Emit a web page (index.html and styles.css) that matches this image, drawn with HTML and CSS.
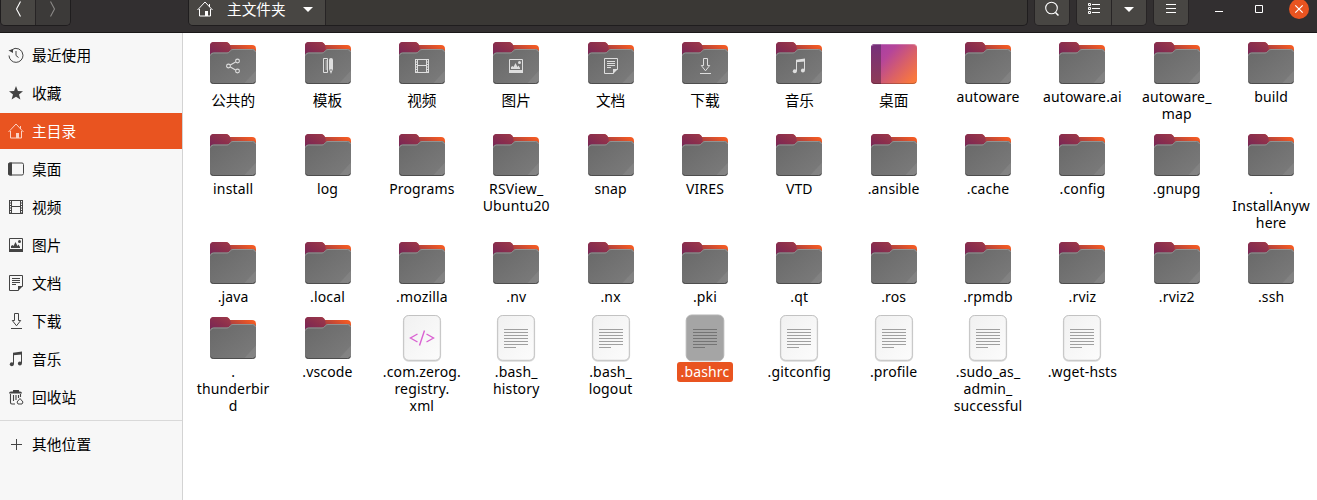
FILE: index.html
```html
<!DOCTYPE html>
<html lang="zh-CN">
<head>
<meta charset="utf-8">
<title>主文件夹</title>
<link rel="stylesheet" href="styles.css">
</head>
<body>
<svg class="defs" width="0" height="0">
  <defs>
    <linearGradient id="g-back" x1="0" y1="1" x2="1" y2="0.4"><stop offset="0" stop-color="#772953"/><stop offset=".45" stop-color="#963548"/><stop offset="1" stop-color="#f15a24"/></linearGradient>
    <linearGradient id="g-tab" x1="0" y1="1" x2="1" y2="0"><stop offset="0" stop-color="#762557"/><stop offset=".55" stop-color="#8c2f4c"/><stop offset="1" stop-color="#a03a4a"/></linearGradient>
    <linearGradient id="g-front" x1="0" y1="0" x2="1" y2="1"><stop offset="0" stop-color="#686868"/><stop offset="1" stop-color="#7c7c7c"/></linearGradient>
    <linearGradient id="g-desk" x1="0" y1="0" x2="1" y2=".8"><stop offset="0" stop-color="#a23ea6"/><stop offset=".35" stop-color="#b5459a"/><stop offset=".68" stop-color="#d96068"/><stop offset="1" stop-color="#f9783e"/></linearGradient>
    <linearGradient id="g-side" x1="0" y1="0" x2="0" y2="1"><stop offset="0" stop-color="#762f7b"/><stop offset="1" stop-color="#8e3c56"/></linearGradient>
    <linearGradient id="g-page" x1="0" y1="0" x2="1" y2="1"><stop offset="0" stop-color="#f1f1f1"/><stop offset="1" stop-color="#fcfcfc"/></linearGradient>
  </defs>
  <symbol id="folder" viewBox="0 0 48 48">
    <path d="M1 16V7q0-4 4-4h12q2 0 3 1.500l1 1.500h22q4 0 4 4v10H1z" fill="url(#g-back)"/>
    <path d="M1 16V7q0-4 4-4h12q2 0 3 1.500l1.500 2.500v5l-6 4z" fill="url(#g-tab)"/>
    <path d="M1 17q0-3.500 3.500-3.500h13.500q1.500 0 2.500-1.200l1-1.100q1-1.200 2.500-1.200h19.500q3.500 0 3.500 3.500v28q0 3.500-3.500 3.500h-39Q1 45 1 41.500z" fill="url(#g-front)"/>
    <path d="M47 31.500v10q0 3.500-3.500 3.500h-9z" fill="#fff" opacity=".07"/>
    <path d="M1.500 16.500q.4-2.500 3-2.500h13.500q1.500 0 2.500-1.200l1-1.100q1-1.200 2.500-1.200h19.500q2.500 0 3 2.500" fill="none" stroke="#929292" stroke-width="1"/>
    <path d="M1.700 42.500q.6 2 2.800 2h39q2.200 0 2.800-2" fill="none" stroke="#4d4d4d" stroke-width="1"/>
  </symbol>
  <symbol id="desktop-big" viewBox="0 0 48 48">
    <rect x="1" y="5" width="46" height="40" rx="4" fill="url(#g-desk)"/>
    <path d="M11 5H5Q1 5 1 9v32q0 4 4 4h6z" fill="url(#g-side)"/>
    <path d="M2 43q1 1.500 3 1.500h38q2 0 3-1.500" fill="none" stroke="#000" opacity=".22"/>
    <path d="M2 7q1-1.500 3-1.500h38q2 0 3 1.500" fill="none" stroke="#fff" opacity=".25"/>
  </symbol>
  <symbol id="page" viewBox="0 0 48 48">
    <rect x="5.500" y="2" width="37" height="45" rx="5" fill="none" stroke="#000" opacity=".15" stroke-width="1.300"/>
    <rect x="5.700" y="1.500" width="36.600" height="44.800" rx="5" fill="url(#g-page)" stroke="#c2c2c2"/>
  </symbol>
  <symbol id="text" viewBox="0 0 48 48">
    <use href="#page"/>
    <path d="M12 15.500h24M12 18.500h24M12 21.500h24M12 24.500h24M12 27.500h24M12 30.500h24M12 33.500h12" stroke="#a0a0a0"/>
  </symbol>
  <symbol id="text-selected" viewBox="0 0 48 48">
    <rect x="5.200" y="1" width="37.600" height="45.800" rx="5.500" fill="#a5a5a5" stroke="#b3b3b3"/>
    <path d="M12 15.500h24M12 18.500h24M12 21.500h24M12 24.500h24M12 27.500h24M12 30.500h24M12 33.500h12" stroke="#747474"/>
  </symbol>
  <symbol id="xml" viewBox="0 0 48 48">
    <use href="#page"/>
    <path d="M19.500 20l-7 4 7 4M28.500 20l7 4-7 4M26.500 16.500l-5 15" fill="none" stroke="#da62d2" stroke-width="1.400"/>
  </symbol>
  <symbol id="share" viewBox="0 0 16 16"><g fill="none" stroke="currentColor" stroke-width="1.100"><circle cx="3.500" cy="8" r="1.900"/><circle cx="12.500" cy="3" r="1.900"/><circle cx="12.500" cy="13" r="1.900"/><path d="M5.300 7l5.300-3M5.300 9l5.300 3"/></g></symbol>
  <symbol id="template" viewBox="0 0 16 16"><path d="M3.500.5h4v14h-4zM5.500 3h2M5.500 5h2M5.500 7h2M5.500 9h2M5.500 11h2" fill="none" stroke="currentColor"/><path d="M9 2q0-2 2-2t2 2v9l-2 5-2-5z" fill="currentColor"/><path d="M10 12h2" stroke="#747474"/></symbol>
  <symbol id="film" viewBox="0 0 16 16"><path d="M3.500 1.500h9v13h-9zM3.500 7.500h9M1 1.500h14M1 14.500h14" fill="none" stroke="currentColor"/><path d="M1.500 1v14M14.500 1v14" stroke="currentColor"/><path d="M2.500 3.500v11M13.500 3.500v11" stroke="currentColor" stroke-dasharray="1 1.500"/></symbol>
  <symbol id="image" viewBox="0 0 16 16"><path d="M1.500 1.500h13v12h-13z" fill="none" stroke="currentColor"/><path d="M1 12h14v3H1zM3 11V9l1.500-1 1 1L7.500 5l2 4 1-1.500L12 10v1z" fill="currentColor"/><circle cx="11.500" cy="4.500" r="1.500" fill="currentColor"/></symbol>
  <symbol id="doc" viewBox="0 0 16 16"><path d="M10.500 15.500h-9V.5h13v11M4 3.500h8M4 5.500h8M4 7.500h8M4 9.500h4" fill="none" stroke="currentColor"/><path d="M10 11h5l-5 5z" fill="currentColor"/></symbol>
  <symbol id="download" viewBox="0 0 16 16"><path d="M6.500.5h4v7h2.200L8.500 12.800 4.300 7.500h2.200zM3 15.500h11" fill="none" stroke="currentColor"/></symbol>
  <symbol id="music" viewBox="0 0 16 16"><path d="M5 1.800L14 .5v3L5 4.200z" fill="currentColor"/><path d="M5.500 2v11M13.500 1v11" stroke="currentColor"/><circle cx="3.800" cy="13.300" r="2" fill="currentColor"/><circle cx="11.900" cy="12.500" r="2" fill="currentColor"/></symbol>
  <symbol id="home" viewBox="0 0 16 16"><path d="M.5 9L8 1l7.500 8M2.500 8v7h11V8M12.500 3v3" fill="none" stroke="currentColor"/><path d="M8 10h3v5H8z" fill="currentColor"/></symbol>
  <symbol id="recent" viewBox="0 0 16 16"><path d="M3.500 3A7 7 0 0 1 15 8.200 7 7 0 0 1 1 8.500M8 4v4.500l2.500 2" fill="none" stroke="currentColor"/><path d="M.5 3.500L5 2v4z" fill="currentColor"/></symbol>
  <symbol id="star" viewBox="0 0 16 16"><path d="M8 1l1.900 4.900 5.100.3-4 3.300 1.400 5L8 11.700l-4.400 2.800 1.400-5-4-3.300 5.100-.3z" fill="currentColor"/></symbol>
  <symbol id="desk" viewBox="0 0 16 16"><rect x=".5" y="2" width="15" height="12" rx="1.500" fill="none" stroke="currentColor"/><path d="M4 1.500H2q-2 0-2 2v9q0 2 2 2h2z" fill="currentColor"/></symbol>
  <symbol id="trash" viewBox="0 0 16 16"><path d="M1 4.500q0-2 2-2h2V1h6v1.500h1q2 0 2 2z" fill="currentColor"/><path d="M2.500 5v8.500q0 1.500 1.500 1.500h3M5.500 6v6M8 6v5M10.500 6v3M12.500 5v3" fill="none" stroke="currentColor" stroke-width="1.100"/><path d="M12 9.500l3 3.500-1 2h-4l-1-2z" fill="none" stroke="currentColor"/></symbol>
  <symbol id="plus" viewBox="0 0 16 16"><path d="M3 8.500h11M8.500 3v11" stroke="currentColor"/></symbol>
  <symbol id="search" viewBox="0 0 16 16"><circle cx="7.500" cy="7" r="5.800" fill="none" stroke="currentColor" stroke-width="1.100"/><path d="M11.500 11.500l3 3" stroke="currentColor" stroke-width="1.500"/></symbol>
  <symbol id="list" viewBox="0 0 16 16"><path d="M2.500 2.500h2v2h-2zM2.500 6.500h2v2h-2zM2.500 10.500h2v2h-2zM6 3.500h8M6 7.500h8M6 11.500h8" fill="none" stroke="currentColor"/></symbol>
  <symbol id="caret" viewBox="0 0 16 16"><path d="M3 6h10l-5 5z" fill="currentColor"/></symbol>
  <symbol id="menu" viewBox="0 0 16 16"><path d="M3 3.500h10M3 7.500h10M3 11.500h10" stroke="currentColor"/></symbol>
  <symbol id="prev" viewBox="0 0 16 16"><path d="M10.500.5L6.500 8l4 7.500" fill="none" stroke="currentColor" stroke-width="1.100"/></symbol>
  <symbol id="next" viewBox="0 0 16 16"><path d="M5.500.5L9.500 8l-4 7.500" fill="none" stroke="currentColor" stroke-width="1.100"/></symbol>
</svg>

<header class="bar">
  <div class="group nav">
    <button class="btn"><svg><use href="#prev"/></svg></button><button class="btn off"><svg><use href="#next"/></svg></button>
  </div>
  <div class="path">
    <button class="crumb"><svg><use href="#home"/></svg><span>主文件夹</span><svg><use href="#caret"/></svg></button>
  </div>
  <div class="group"><button class="btn"><svg><use href="#search"/></svg></button></div>
  <div class="group"><button class="btn"><svg><use href="#list"/></svg></button><button class="btn"><svg><use href="#caret"/></svg></button></div>
  <div class="group"><button class="btn"><svg><use href="#menu"/></svg></button></div>
  <div class="window-controls">
    <svg viewBox="0 0 20 20"><path d="M6 12.500h8" stroke="#fff"/></svg>
    <svg viewBox="0 0 20 20"><path d="M6.500 6.500h7v7h-7z" fill="none" stroke="#fff"/></svg>
    <svg viewBox="0 0 20 20"><circle cx="10" cy="10" r="10" fill="#e95420"/><path d="M6.300 6.300l7.400 7.400M13.700 6.300l-7.400 7.400" stroke="#fff" stroke-width="1.200"/></svg>
  </div>
</header>
<div class="main">
  <nav class="sidebar">
    <a class="place"><svg><use href="#recent"/></svg>最近使用</a>
    <a class="place"><svg><use href="#star"/></svg>收藏</a>
    <a class="place active"><svg><use href="#home"/></svg>主目录</a>
    <a class="place"><svg><use href="#desk"/></svg>桌面</a>
    <a class="place"><svg><use href="#film"/></svg>视频</a>
    <a class="place"><svg><use href="#image"/></svg>图片</a>
    <a class="place"><svg><use href="#doc"/></svg>文档</a>
    <a class="place"><svg><use href="#download"/></svg>下载</a>
    <a class="place"><svg><use href="#music"/></svg>音乐</a>
    <a class="place"><svg><use href="#trash"/></svg>回收站</a>
    <hr>
    <a class="place"><svg><use href="#plus"/></svg>其他位置</a>
  </nav>
  <main class="files" id="files"></main>
</div>
<script src="files.js"></script>
</body>
</html>
```

FILE: styles.css
```css
* { box-sizing: border-box; }
body {
  margin: 0;
  height: 500px;
  overflow: hidden;
  display: flex;
  flex-direction: column;
  background: #fff;
  color: #000;
  font: 14.67px/22px "Noto Sans", "Noto Sans CJK SC", sans-serif;
}
svg { display: block; flex: none; width: 16px; height: 16px; }
svg.defs { position: absolute; width: 0; height: 0; }
button { border: 0; padding: 0; font: inherit; color: inherit; }

.bar {
  height: 33px;
  flex: none;
  display: flex;
  align-items: flex-start;
  background: #322f30;
  border-bottom: 1px solid #1a1819;
  color: #fff;
}
.group {
  display: flex;
  height: 26px;
  margin-right: 6px;
  border: 1px solid #272425;
  border-top: 0;
  border-radius: 0 0 5px 5px;
  overflow: hidden;
}
.nav { margin-right: 117px; border-color: #1f1d1e; }
.btn {
  width: 34px;
  display: flex;
  justify-content: center;
  padding-top: 1px;
  background: #484643;
}
.btn + .btn { width: 35px; border-left: 1px solid #272425; }
.btn.off { background: #3c3a39; color: #8b8987; }
.path {
  width: 840px;
  height: 26px;
  margin-right: 6px;
  background: #3a3835;
  border: 1px solid #1f1d1e;
  border-top: 0;
  border-radius: 0 0 5px 5px;
}
.crumb {
  width: 137px;
  height: 25px;
  display: flex;
  align-items: flex-start;
  padding: 1px 0 0 8px;
  background: #484643;
  border-right: 1px solid #272425;
  border-radius: 0 0 0 4px;
  font-family: "Noto Sans CJK SC", sans-serif;
  line-height: 15px;
}
.crumb span { margin: 0 14px; }
.window-controls { display: flex; gap: 20px; margin: -1px 0 0 14px; }
.window-controls svg { width: 20px; height: 20px; }

.main { flex: 1; display: flex; min-height: 0; }
.sidebar {
  width: 183px;
  flex: none;
  padding-top: 4px;
  background: #f7f7f7;
  border-right: 1px solid #d3d3d3;
  font-family: "Noto Sans CJK SC", sans-serif;
  letter-spacing: .15px;
}
.place {
  height: 36px;
  margin-bottom: 2px;
  padding-left: 8px;
  display: flex;
  align-items: center;
  gap: 8px;
}
.place svg { color: #444; }
.place.active { background: #e95420; color: #fff; }
.place.active svg { color: #fbd3c5; }
.sidebar hr { height: 1px; border: 0; margin: 5px 0; background: #d9d9d9; }

.files {
  flex: none;
  width: 1132.320px;
  margin-left: 2.980px;
  padding-top: 6px;
  display: grid;
  grid-template-columns: repeat(12, 1fr);
  grid-template-rows: 92px 108px 75px 110px;
}
.file { display: flex; flex-direction: column; align-items: center; }
.thumb { display: grid; place-items: center; height: 48px; flex: none; }
.thumb > svg { grid-area: 1 / 1; }
.thumb .base { width: 48px; height: 48px; }
.thumb .emblem { color: #dedede; margin-top: 6px; }
.name {
  margin-top: 1px;
  padding: 0 4px;
  border-radius: 3px;
  font-size: 14px;
  line-height: 17px;
  letter-spacing: .15px;
  text-align: center;
  white-space: nowrap;
}
.name span { display: block; }
.name.zh { font: 14.67px/22px "Noto Sans CJK SC", sans-serif; letter-spacing: 0; margin-top: 2px; }
.name.selected { background: #e95420; color: #fff; padding: 1px 4px 2px; margin-top: 0; }
```

FILE: files.js
```javascript
// Each entry: label lines separated by "|", then icon, then emblem.
const entries = [
  ["公共的", "folder", "share"], ["模板", "folder", "template"], ["视频", "folder", "film"],
  ["图片", "folder", "image"], ["文档", "folder", "doc"], ["下载", "folder", "download"],
  ["音乐", "folder", "music"], ["桌面", "desktop-big"],
  ["autoware"], ["autoware.ai"], ["autoware_|map"], ["build"],
  ["install"], ["log"], ["Programs"], ["RSView_|Ubuntu20"], ["snap"], ["VIRES"], ["VTD"],
  [".ansible"], [".cache"], [".config"], [".gnupg"], [".|InstallAnyw|here"],
  [".java"], [".local"], [".mozilla"], [".nv"], [".nx"], [".pki"], [".qt"], [".ros"],
  [".rpmdb"], [".rviz"], [".rviz2"], [".ssh"],
  [".|thunderbir|d"], [".vscode"], [".com.zerog.|registry.|xml", "xml"],
  [".bash_|history", "text"], [".bash_|logout", "text"], [".bashrc", "text-selected"],
  [".gitconfig", "text"], [".profile", "text"], [".sudo_as_|admin_|successful", "text"],
  [".wget-hsts", "text"],
];
const use = (cls, id) => `<svg class="${cls}"><use href="#${id}"/></svg>`;
document.getElementById("files").innerHTML = entries.map(([label, icon = "folder", emblem], i) => {
  const state = i < 8 ? " zh" : icon === "text-selected" ? " selected" : "";
  const lines = label.split("|").map((l) => `<span>${l}</span>`).join("");
  return `<div class="file"><div class="thumb">${use("base", icon)}${emblem ? use("emblem", emblem) : ""}</div><div class="name${state}">${lines}</div></div>`;
}).join("");
```
